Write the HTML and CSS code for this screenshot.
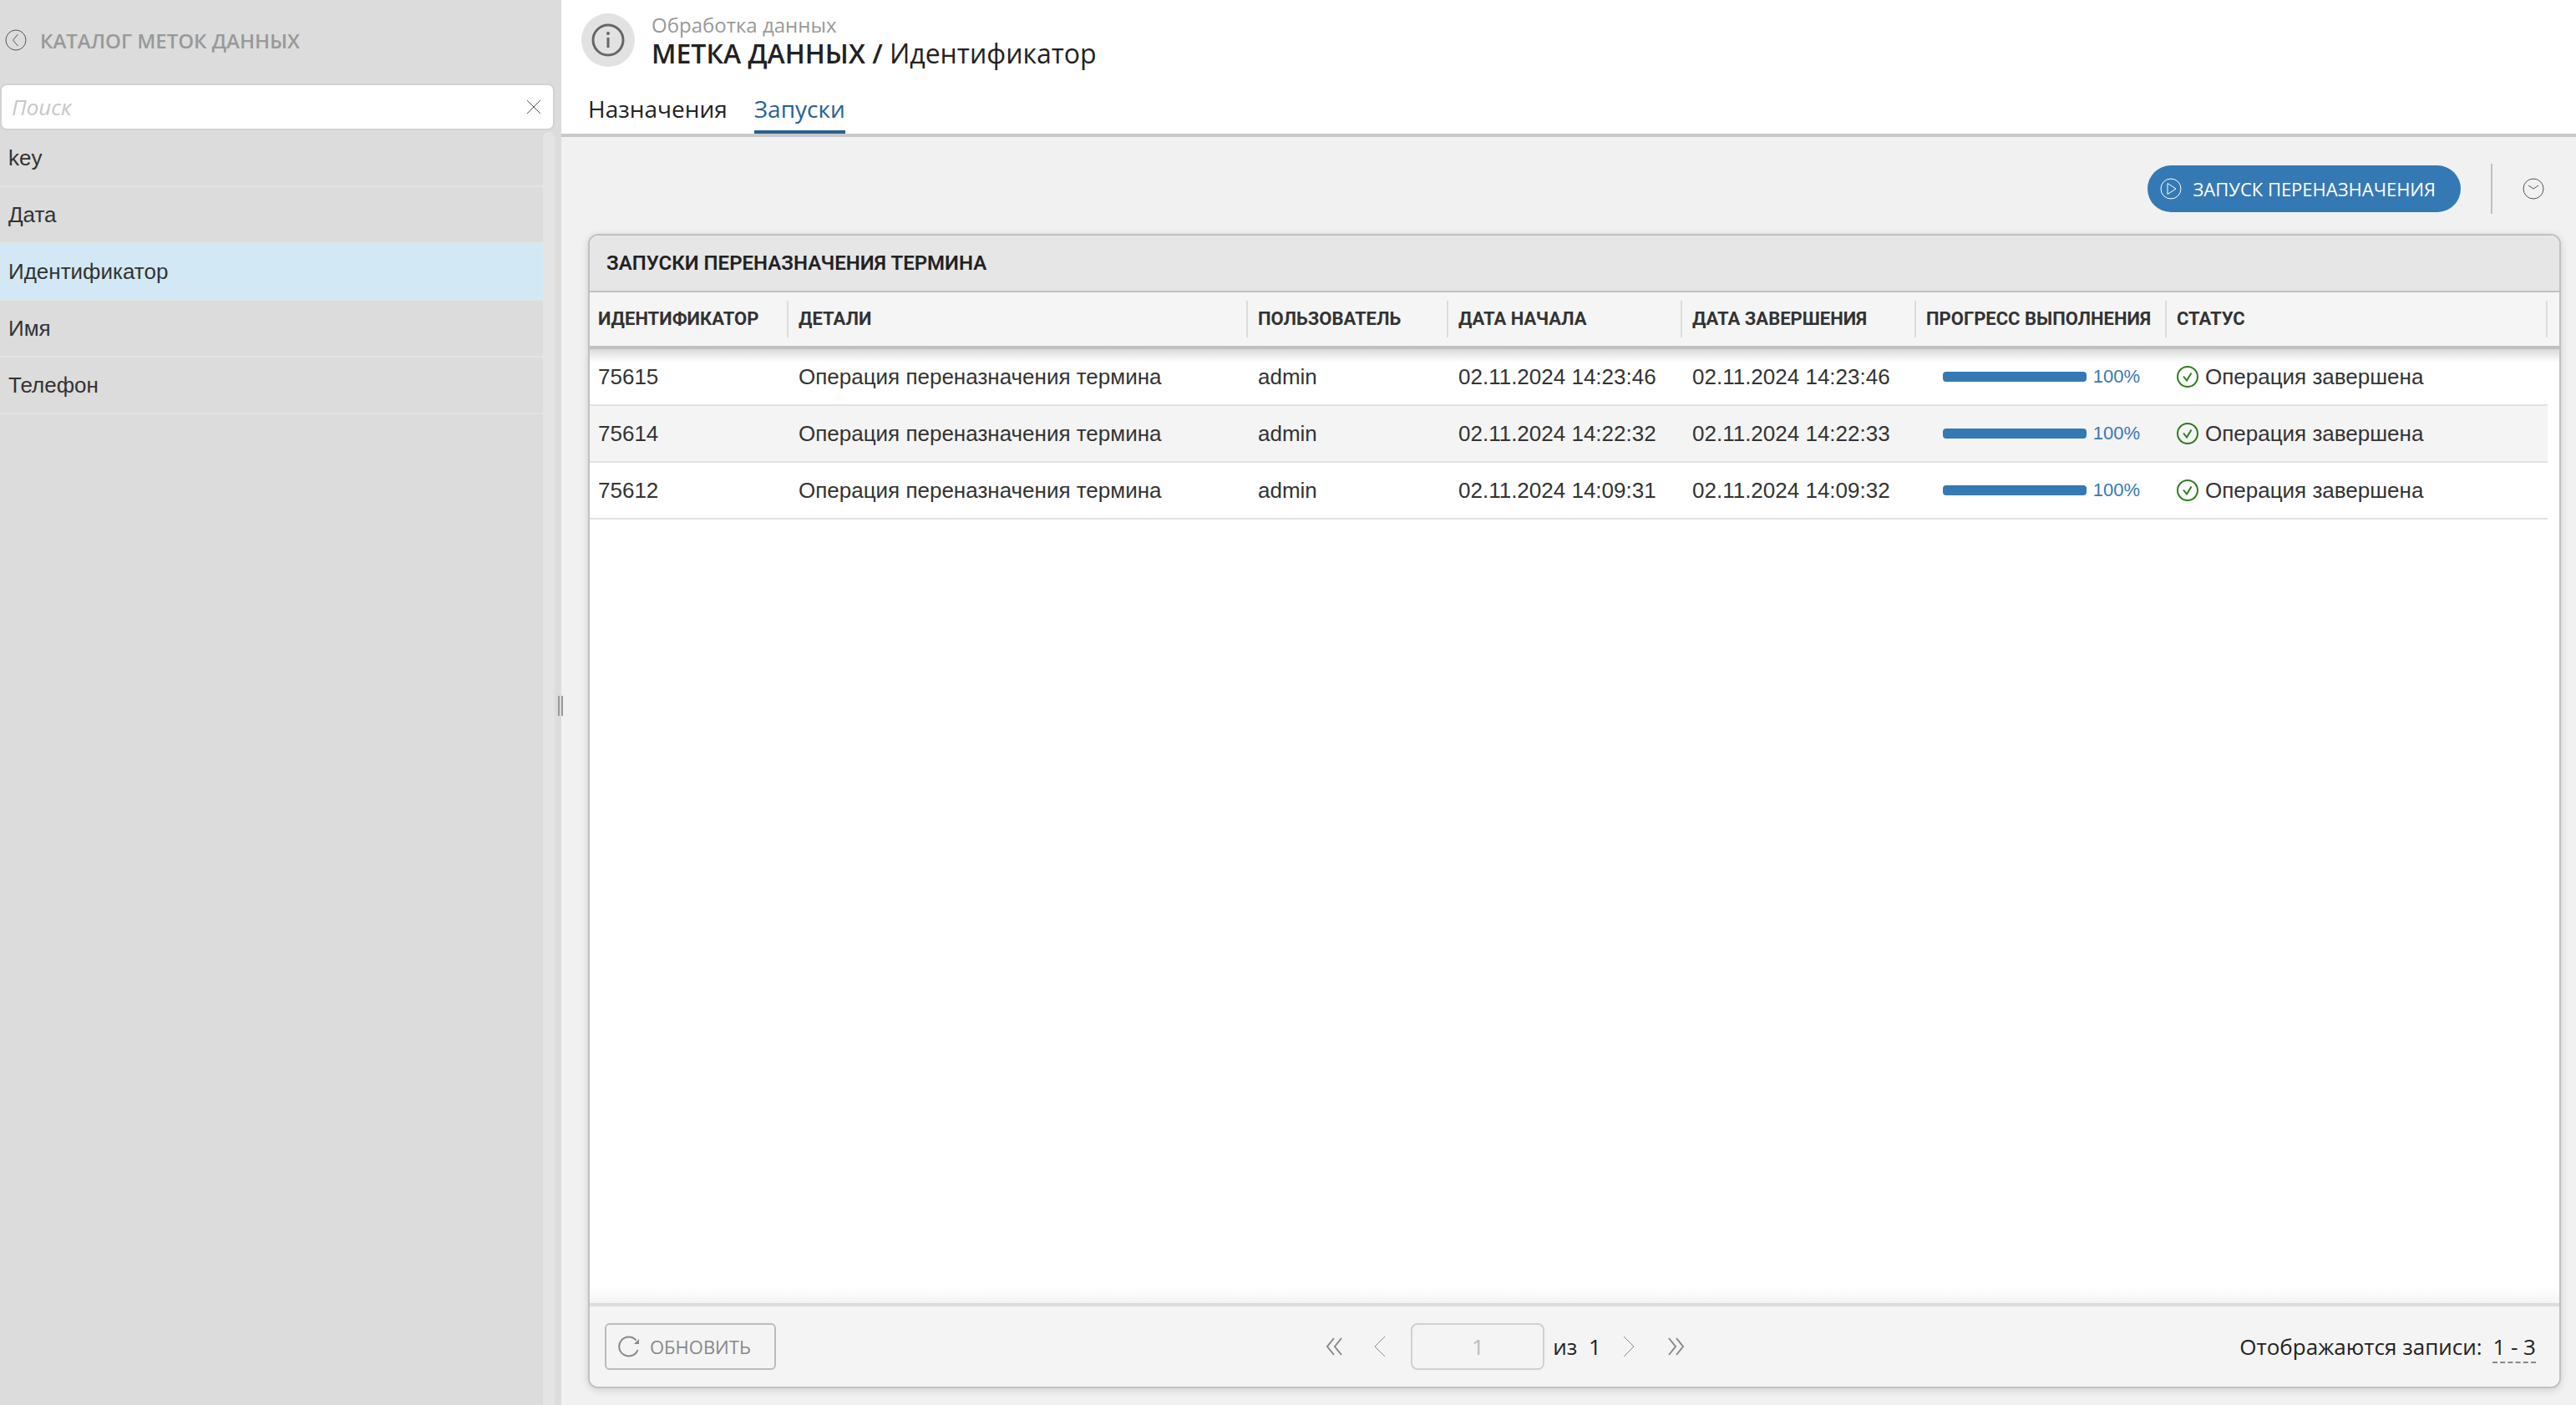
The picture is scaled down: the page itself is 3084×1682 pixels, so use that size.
FILE: index.html
```html
<!DOCTYPE html>
<html lang="ru">
<head>
  <meta charset="UTF-8" />
  <meta name="viewport" content="width=device-width, initial-scale=1.0"/>
  <title>Метка данных / Идентификатор</title>
  <link rel="stylesheet" href="styles.css">
</head>
<body>
  <aside class="sidebar">
    <div class="sidebar-head">
      <button class="icon-btn" type="button" aria-label="Назад">
        <svg width="26" height="26" viewBox="0 0 26 26"><circle cx="13" cy="13" r="12"/><path d="M15.500 6l-6 7 6 7"/></svg>
      </button>
      <h2>КАТАЛОГ МЕТОК ДАННЫХ</h2>
    </div>
    <div class="search">
      <input type="text" placeholder="Поиск" aria-label="Поиск">
      <button class="icon-btn" type="button" aria-label="Очистить">
        <svg width="18" height="18" viewBox="0 0 18 18"><path d="M1 1l16 16M17 1L1 17"/></svg>
      </button>
    </div>
    <div class="catalog">
      <ul class="catalog-list">
        <li><a href="#">key</a></li>
        <li><a href="#">Дата</a></li>
        <li class="selected"><a href="#">Идентификатор</a></li>
        <li><a href="#">Имя</a></li>
        <li><a href="#">Телефон</a></li>
      </ul>
      <div class="scroll-track"></div>
    </div>
    <div class="splitter"></div>
  </aside>

  <main class="content">
    <header class="page-head">
      <div class="page-title">
        <span class="info">
          <svg width="40" height="40" viewBox="0 0 40 40"><circle cx="20" cy="20" r="18"/><path d="M20 17v12"/><circle class="dot" cx="20" cy="12" r="2"/></svg>
        </span>
        <div>
          <p class="crumb">Обработка данных</p>
          <h1>МЕТКА ДАННЫХ / <span>Идентификатор</span></h1>
        </div>
      </div>
      <nav class="tabs">
        <a href="#">Назначения</a>
        <a href="#" class="active">Запуски</a>
      </nav>
    </header>

    <div class="toolbar">
      <button class="run-btn" type="button">
        <svg width="26" height="26" viewBox="0 0 26 26"><circle cx="13" cy="13" r="12"/><path d="M9 6.500v13l10-6.500z"/></svg>
        ЗАПУСК ПЕРЕНАЗНАЧЕНИЯ
      </button>
      <span class="divider"></span>
      <button class="icon-btn" type="button" aria-label="История">
        <svg width="26" height="26" viewBox="0 0 26 26"><circle cx="13" cy="13" r="12"/><path d="M7 9l6 4 6-4"/></svg>
      </button>
    </div>

    <section class="panel">
      <h3>ЗАПУСКИ ПЕРЕНАЗНАЧЕНИЯ ТЕРМИНА</h3>
      <div class="grid">
        <table>
          <colgroup>
            <col class="c-id"><col class="c-details"><col class="c-user"><col class="c-date"><col class="c-date"><col class="c-progress"><col><col class="c-gutter">
          </colgroup>
          <thead>
            <tr>
              <th><span>ИДЕНТИФИКАТОР</span></th>
              <th><span>ДЕТАЛИ</span></th>
              <th><span>ПОЛЬЗОВАТЕЛЬ</span></th>
              <th><span>ДАТА НАЧАЛА</span></th>
              <th><span>ДАТА ЗАВЕРШЕНИЯ</span></th>
              <th><span>ПРОГРЕСС ВЫПОЛНЕНИЯ</span></th>
              <th><span>СТАТУС</span></th>
              <th></th>
            </tr>
          </thead>
          <tbody>
            <tr>
              <td>75615</td>
              <td>Операция переназначения термина</td>
              <td>admin</td>
              <td>02.11.2024 14:23:46</td>
              <td>02.11.2024 14:23:46</td>
              <td><div class="progress"><div class="track"><div class="bar" style="width: 100%"></div></div>100%</div></td>
              <td><div class="status"><svg width="26" height="26" viewBox="0 0 26 26"><circle cx="13" cy="13" r="12"/><path d="M8 12.500l4 5 5.500-9"/></svg>Операция завершена</div></td>
              <td></td>
            </tr>
            <tr>
              <td>75614</td>
              <td>Операция переназначения термина</td>
              <td>admin</td>
              <td>02.11.2024 14:22:32</td>
              <td>02.11.2024 14:22:33</td>
              <td><div class="progress"><div class="track"><div class="bar" style="width: 100%"></div></div>100%</div></td>
              <td><div class="status"><svg width="26" height="26" viewBox="0 0 26 26"><circle cx="13" cy="13" r="12"/><path d="M8 12.500l4 5 5.500-9"/></svg>Операция завершена</div></td>
              <td></td>
            </tr>
            <tr>
              <td>75612</td>
              <td>Операция переназначения термина</td>
              <td>admin</td>
              <td>02.11.2024 14:09:31</td>
              <td>02.11.2024 14:09:32</td>
              <td><div class="progress"><div class="track"><div class="bar" style="width: 100%"></div></div>100%</div></td>
              <td><div class="status"><svg width="26" height="26" viewBox="0 0 26 26"><circle cx="13" cy="13" r="12"/><path d="M8 12.500l4 5 5.500-9"/></svg>Операция завершена</div></td>
              <td></td>
            </tr>
          </tbody>
        </table>
      </div>
      <footer class="panel-foot">
        <button class="refresh-btn" type="button">
          <svg width="26" height="26" viewBox="0 0 26 26"><path d="M23.500 17A11.500 11.500 0 1 1 21.500 5.500"/><path class="solid" d="M25 4v6h-6z"/></svg>
          ОБНОВИТЬ
        </button>
        <div class="pager">
          <button class="icon-btn double" type="button" aria-label="Первая страница">
            <svg width="20" height="22" viewBox="0 0 20 22"><path d="M10 1L2 11l8 10M19 1l-8 10 8 10"/></svg>
          </button>
          <button class="icon-btn" type="button" aria-label="Предыдущая страница">
            <svg width="14" height="26" viewBox="0 0 14 26"><path d="M13 1L1 13l12 12"/></svg>
          </button>
          <input type="text" value="1" aria-label="Страница" disabled>
          <span class="total">из&nbsp; 1</span>
          <button class="icon-btn" type="button" aria-label="Следующая страница">
            <svg width="14" height="26" viewBox="0 0 14 26"><path d="M1 1l12 12L1 25"/></svg>
          </button>
          <button class="icon-btn double" type="button" aria-label="Последняя страница">
            <svg width="20" height="22" viewBox="0 0 20 22"><path d="M1 1l8 10-8 10M10 1l8 10-8 10"/></svg>
          </button>
        </div>
        <div class="records">Отображаются записи: <a href="#">1 - 3</a></div>
      </footer>
    </section>
  </main>
</body>
</html>
```
FILE: styles.css
```css
* {
  box-sizing: border-box;
}

body {
  margin: 0;
  height: 100vh;
  display: flex;
  font-family: "Open Sans", "Noto Sans", sans-serif;
  font-size: 26px;
  color: #222;
  background: #f1f1f1;
}

h1, h2, h3, p, ul {
  margin: 0;
  padding: 0;
}

a {
  color: inherit;
  text-decoration: none;
}

button, input {
  font-family: inherit;
}

svg {
  display: block;
  flex: none;
  fill: none;
  stroke: currentColor;
}

.icon-btn {
  padding: 0;
  border: none;
  background: none;
  color: #555;
  cursor: pointer;
}

/* sidebar */
.sidebar {
  position: relative;
  width: 672px;
  flex: none;
  display: flex;
  flex-direction: column;
  background: #dcdcdc;
}

.sidebar-head {
  height: 100px;
  padding: 0 6px 4px;
  display: flex;
  align-items: center;
  gap: 16px;
}

.sidebar-head h2 {
  font-size: 24px;
  font-weight: 600;
  color: #999;
}

.search {
  height: 56px;
  margin-right: 8px;
  padding: 0 14px 0 12px;
  display: flex;
  align-items: center;
  background: #fff;
  border: 2px solid #d2d2d2;
  border-radius: 8px;
}

.search input {
  flex: 1;
  padding: 0;
  border: none;
  outline: none;
  background: none;
  font-size: 26px;
}

.search input::placeholder {
  font-style: italic;
  color: #c8c8c8;
}

.catalog {
  flex: 1;
  display: flex;
  padding-right: 8px;
}

.catalog-list {
  flex: 1;
  list-style: none;
  font-family: "Liberation Sans", sans-serif;
  color: #333;
}

.catalog-list li {
  border-bottom: 2px solid #e3e3e3;
}

.catalog-list a {
  display: block;
  padding: 0 10px;
  line-height: 66px;
}

.catalog-list .selected {
  background: #d2e9f5;
}

.scroll-track {
  width: 14px;
  margin-top: 2px;
  background: #e4e4e4;
  border-radius: 7px 7px 0 0;
}

/* drag handle on the sidebar edge */
.splitter {
  position: absolute;
  right: -2px;
  top: 50%;
  width: 6px;
  height: 24px;
  margin-top: -8px;
  border: solid #999;
  border-width: 0 2px;
}

/* page header */
.content {
  flex: 1;
  min-width: 0;
  display: flex;
  flex-direction: column;
}

.page-head {
  height: 164px;
  display: flex;
  flex-direction: column;
  justify-content: space-between;
  background: #fff;
  border-bottom: 4px solid #c8c8c8;
}

.page-title {
  display: flex;
  gap: 20px;
  padding: 16px 24px 0;
}

.info {
  width: 64px;
  height: 64px;
  display: flex;
  align-items: center;
  justify-content: center;
  border-radius: 50%;
  background: #e2e2e2;
  color: #666;
}

.info svg {
  stroke-width: 3;
}

.info .dot {
  fill: currentColor;
  stroke: none;
}

.crumb {
  font-size: 24px;
  line-height: 28px;
  color: #999;
}

.page-title h1 {
  font-size: 32px;
  line-height: 40px;
  font-weight: 600;
}

.page-title h1 span {
  font-weight: 400;
}

.tabs {
  display: flex;
  gap: 32px;
  padding: 0 32px;
}

.tabs a {
  font-size: 28px;
  line-height: 40px;
  padding-bottom: 6px;
  border-bottom: 4px solid transparent;
}

.tabs .active {
  color: #276194;
  border-color: #276194;
}

/* toolbar */
.toolbar {
  display: flex;
  align-items: center;
  justify-content: flex-end;
  padding: 32px 38px 24px 0;
}

.run-btn {
  height: 56px;
  padding: 0 30px 0 15px;
  display: flex;
  align-items: center;
  gap: 14px;
  border: none;
  border-radius: 28px;
  background: #3579b4;
  color: #fff;
  font-size: 22px;
  cursor: pointer;
}

.divider {
  width: 2px;
  height: 60px;
  margin: 0 36px;
  background: #c0c0c0;
}

/* grid panel */
.panel {
  flex: 1;
  min-height: 0;
  margin: 0 18px 20px 32px;
  display: flex;
  flex-direction: column;
  background: #fff;
  border: 2px solid #c0c0c0;
  border-radius: 12px;
  box-shadow: 0 2px 10px rgba(0,0,0,0.15);
  overflow: hidden;
}

.panel h3 {
  padding: 0 20px;
  font-family: Roboto, sans-serif;
  font-size: 24px;
  line-height: 66px;
  font-weight: 600;
  background: #e6e6e6;
  border-bottom: 2px solid #c0c0c0;
}

.grid {
  flex: 1;
  min-height: 0;
  overflow: hidden;
  background: linear-gradient(to top, #f4f4f4, #fff 20px);
}

table {
  width: 100%;
  table-layout: fixed;
  border-collapse: separate;
  border-spacing: 0;
  font-family: "Liberation Sans", sans-serif;
  color: #333;
}

.c-id { width: 238px; }
.c-details { width: 550px; }
.c-user { width: 240px; }
.c-date { width: 280px; }
.c-progress { width: 300px; }
.c-gutter { width: 14px; }

th {
  height: 68px;
  padding: 0;
  text-align: left;
  font-family: Roboto, sans-serif;
  font-size: 22px;
  font-weight: 700;
  background: #f5f5f5;
  border-bottom: 4px solid #c0c0c0;
}

th span {
  display: block;
  padding-left: 12px;
  line-height: 44px;
  white-space: nowrap;
  border-right: 2px solid #dcdcdc;
}

td {
  height: 68px;
  padding: 0 12px;
  white-space: nowrap;
  border-bottom: 2px solid #e1e1e1;
}

th:first-child span,
td:first-child {
  padding-left: 10px;
}

td:last-child {
  padding: 0;
  border-bottom: none;
}

tbody tr:nth-child(even) td:not(:last-child) {
  background: #f4f4f4;
}

/* shadow cast by the header */
tbody tr:first-child td {
  background: linear-gradient(#dadada, #fff 16px);
}

.progress {
  display: flex;
  align-items: center;
  gap: 8px;
  padding: 0 20px;
  font-size: 22px;
  color: #3579b4;
}

.track {
  flex: 1;
}

.bar {
  height: 12px;
  border-radius: 4px;
  background: #3579b4;
}

.status {
  display: flex;
  align-items: center;
  gap: 8px;
}

.status svg {
  color: #2e7d1e;
  stroke-width: 2;
}

/* panel footer */
.panel-foot {
  height: 100px;
  padding: 0 28px 0 18px;
  display: flex;
  justify-content: space-between;
  align-items: center;
  background: #f4f4f4;
  border-top: 4px solid #dcdcdc;
}

.refresh-btn {
  height: 56px;
  padding: 0 28px 0 14px;
  display: flex;
  align-items: center;
  gap: 12px;
  border: 2px solid #bbb;
  border-radius: 6px;
  background: none;
  color: #888;
  font-size: 22px;
  cursor: pointer;
}

.refresh-btn svg {
  stroke-width: 2;
}

.refresh-btn .solid {
  fill: currentColor;
  stroke: none;
}

.pager {
  display: flex;
  align-items: center;
  padding-right: 6px;
}

.pager .icon-btn {
  color: #888;
}

.pager .double {
  stroke-width: 2;
}

.pager .icon-btn:first-child {
  margin-right: 38px;
}

.pager .icon-btn:last-child {
  margin-left: 40px;
}

.pager input {
  width: 160px;
  height: 56px;
  margin: 0 10px 0 30px;
  text-align: center;
  font-size: 26px;
  color: #bbb;
  border: 2px solid #d0d0d0;
  border-radius: 8px;
  background: none;
}

.total {
  margin-right: 26px;
}

.records a {
  margin-left: 6px;
  border-bottom: 2px dashed #888;
}
```
